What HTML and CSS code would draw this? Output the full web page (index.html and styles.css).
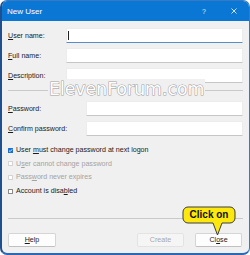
FILE: index.html
```html
<!DOCTYPE html>
<html>
<head>
<meta charset="utf-8">
<link rel="stylesheet" href="styles.css">
</head>
<body>
<div class="window">
  <div class="titlebar">
    <span class="title">New User</span>
    <span class="q">?</span>
    <svg class="close-x" width="6" height="6" viewBox="0 0 6 6"><path d="M0.5 0.5 L5.5 5.5 M5.5 0.5 L0.5 5.5" stroke="#e4eefa" stroke-width="0.9" fill="none"/></svg>
  </div>
  <div class="content">
    <div class="fields fields-a">
      <span class="label"><u>U</u>ser name:</span>
      <div class="input focused"><span class="caret"></span></div>
      <span class="label"><u>F</u>ull name:</span>
      <div class="input"></div>
      <span class="label"><u>D</u>escription:</span>
      <div class="input"></div>
    </div>
    <div class="sep sep-mark"><span class="watermark">ElevenForum.com</span></div>
    <div class="fields fields-b">
      <span class="label"><u>P</u>assword:</span>
      <div class="input"></div>
      <span class="label"><u>C</u>onfirm password:</span>
      <div class="input"></div>
    </div>
    <div class="checks">
      <div class="check"><span class="box checked"><svg width="5" height="5" viewBox="0 0 5 5"><path d="M1 2.6 L2.1 3.6 L4.1 1.3" stroke="#fff" stroke-width="0.8" fill="none"/></svg></span><span>User <u>m</u>ust change password at next logon</span></div>
      <div class="check disabled"><span class="box"></span><span>U<u>s</u>er cannot change password</span></div>
      <div class="check disabled"><span class="box"></span><span>Pass<u>w</u>ord never expires</span></div>
      <div class="check"><span class="box"></span><span>Account is disa<u>b</u>led</span></div>
    </div>
    <div class="sep sep-bottom"></div>
    <div class="buttons">
      <button class="btn"><u>H</u>elp</button>
      <span class="spacer"></span>
      <button class="btn btn-disabled">Create</button>
      <button class="btn btn-close">Cl<u>o</u>se</button>
      <div class="callout">
        <svg width="54" height="30" viewBox="0 0 54 30"><path d="M6 1 H48 A5 5 0 0 1 53 6 V12 A5 5 0 0 1 48 17 H40 L35.5 29 L31 17 H6 A5 5 0 0 1 1 12 V6 A5 5 0 0 1 6 1 Z" fill="#fce80f" stroke="#3c3c3c" stroke-width="1"/></svg>
        <span class="callout-text">Click on</span>
      </div>
    </div>
  </div>
</div>
</body>
</html>
```
FILE: styles.css
```css
html, body {
  margin: 0;
  padding: 0;
  background: #ffffff;
}

.window {
  width: 250px;
  height: 255px;
  box-sizing: border-box;
  border: 1px solid #3a78c4;
  border-left: 2px solid #1f4f8f;
  border-bottom: 2px solid #2a68b8;
  border-radius: 7px;
  overflow: hidden;
  background: #f0f0f0;
  display: flex;
  flex-direction: column;
  font-family: "Liberation Sans", Arial, sans-serif;
  font-size: 7.1px;
  color: #1b1b1b;
}

.titlebar {
  height: 20px;
  flex: none;
  background: #0b77d5;
  display: flex;
  align-items: center;
  padding-left: 5px;
  color: #ffffff;
}

.title {
  flex: 1;
  font-size: 8px;
}

.q {
  font-size: 7px;
  color: #dbe9f7;
  margin-right: 25px;
}

.close-x {
  margin-right: 12px;
}

.content {
  flex: 1;
  padding: 7px 6px 0 6px;
  display: flex;
  flex-direction: column;
}

.fields {
  display: grid;
  row-gap: 5px;
  align-items: center;
}

.fields-a {
  grid-template-columns: 58px 1fr;
}

.fields-b {
  grid-template-columns: 78px 1fr;
  margin-top: 10px;
}

.label {
  white-space: nowrap;
}

u {
  text-decoration-thickness: 0.6px;
  text-underline-offset: 1px;
}

.input {
  height: 15px;
  box-sizing: border-box;
  background: #ffffff;
  border: 1px solid #ececec;
  border-bottom-color: #c6c6c6;
  border-radius: 1px;
  position: relative;
}

.input.focused {
  border-bottom: 1px solid #5a8ccc;
}

.caret {
  position: absolute;
  left: 1px;
  top: 2px;
  width: 1px;
  height: 9px;
  background: #222;
}

.sep {
  height: 1px;
  background: #c9c9c9;
}

.sep-mark {
  margin-top: 7px;
  position: relative;
}

.watermark {
  position: absolute;
  left: 40px;
  top: -11px;
  padding: 0 1px;
  background: #f0f0f0;
  font-family: "DejaVu Sans", sans-serif;
  font-size: 17.3px;
  line-height: 20px;
  color: #ffffff;
  -webkit-text-stroke: 1.1px #a0a0a0;
  paint-order: stroke fill;
  white-space: nowrap;
}

.checks {
  margin-top: 7.5px;
  display: flex;
  flex-direction: column;
}

.check {
  height: 13.6px;
  display: flex;
  align-items: center;
  gap: 3px;
  white-space: nowrap;
}

.check.disabled {
  color: #a3a3a3;
}

.box {
  width: 5px;
  height: 5px;
  box-sizing: border-box;
  border: 1px solid #8a8a8a;
  background: #ffffff;
  border-radius: 0.5px;
  display: flex;
}

.check.disabled .box {
  border-color: #d3d3d3;
}

.box.checked {
  border: none;
  background: #1b6fd1;
}

.sep-bottom {
  margin-top: 20px;
}

.buttons {
  margin-top: 14px;
  display: flex;
  position: relative;
  padding-right: 1px;
}

.spacer {
  flex: 1;
}

.btn {
  width: 48px;
  height: 14px;
  box-sizing: border-box;
  margin: 0;
  padding: 0;
  border: 1px solid #d5d5d5;
  border-bottom-color: #c0c0c0;
  border-radius: 2px;
  background: #fdfdfd;
  font-family: inherit;
  font-size: 7.1px;
  color: #1b1b1b;
  display: flex;
  align-items: center;
  justify-content: center;
}

.btn-disabled {
  width: 47px;
  margin-right: 11px;
  background: #f5f5f5;
  border-color: #e3e3e3;
  color: #a8a8a8;
}

.btn-close {
  width: 47px;
}

.callout {
  position: absolute;
  left: 174px;
  top: -27px;
  width: 54px;
  height: 30px;
}

.callout svg {
  position: absolute;
  left: 0;
  top: 0;
}

.callout-text {
  position: absolute;
  left: 1px;
  top: 1px;
  width: 52px;
  height: 16px;
  display: flex;
  align-items: center;
  justify-content: center;
  font-weight: bold;
  font-size: 10px;
  color: #111111;
}
```
